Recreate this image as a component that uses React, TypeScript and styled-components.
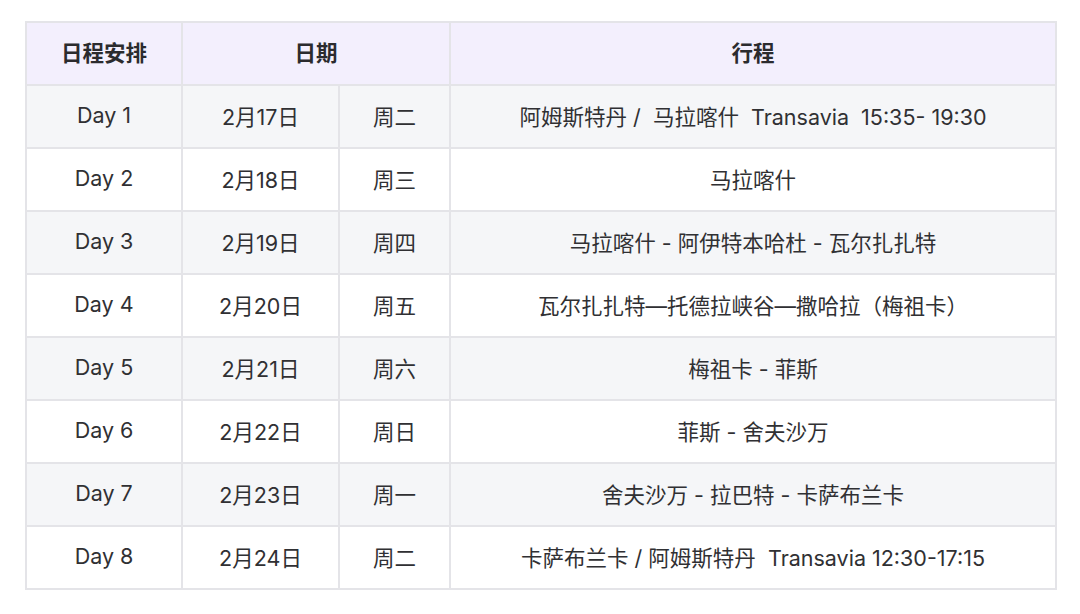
import styled, { createGlobalStyle } from "styled-components";

const GlobalStyle = createGlobalStyle`
  body {
    margin: 0;
    background: #ffffff;
    font-family: Inter, "Noto Sans CJK SC", sans-serif;
  }
`;

type Row = {
  day: string;
  date: string;
  week: string;
  trip: string;
};

const rows: Row[] = [
  { day: "Day 1", date: "2月17日", week: "周二", trip: "阿姆斯特丹 /  马拉喀什  Transavia  15:35- 19:30" },
  { day: "Day 2", date: "2月18日", week: "周三", trip: "马拉喀什" },
  { day: "Day 3", date: "2月19日", week: "周四", trip: "马拉喀什 - 阿伊特本哈杜 - 瓦尔扎扎特" },
  { day: "Day 4", date: "2月20日", week: "周五", trip: "瓦尔扎扎特—托德拉峡谷—撒哈拉（梅祖卡）" },
  { day: "Day 5", date: "2月21日", week: "周六", trip: "梅祖卡 - 菲斯" },
  { day: "Day 6", date: "2月22日", week: "周日", trip: "菲斯 - 舍夫沙万" },
  { day: "Day 7", date: "2月23日", week: "周一", trip: "舍夫沙万 - 拉巴特 - 卡萨布兰卡" },
  { day: "Day 8", date: "2月24日", week: "周二", trip: "卡萨布兰卡 / 阿姆斯特丹  Transavia 12:30-17:15" },
];

export default function App() {
  return (
    <Page>
      <GlobalStyle />
      <Schedule>
        <colgroup>
          <col style={{ width: 156 }} />
          <col style={{ width: 157 }} />
          <col style={{ width: 111 }} />
          <col style={{ width: 606 }} />
        </colgroup>
        <thead>
          <tr>
            <HeadCell>日程安排</HeadCell>
            <HeadCell colSpan={2}>日期</HeadCell>
            <HeadCell>行程</HeadCell>
          </tr>
        </thead>
        <tbody>
          {rows.map((r, i) => (
            <BodyRow key={r.day} $striped={i % 2 === 0}>
              <Cell>{r.day}</Cell>
              <Cell>{r.date}</Cell>
              <Cell>{r.week}</Cell>
              <Cell>{r.trip}</Cell>
            </BodyRow>
          ))}
        </tbody>
      </Schedule>
    </Page>
  );
}

const Page = styled.div`
  padding: 21px 0 0 25px;
`;

const Schedule = styled.table`
  border-collapse: collapse;
  table-layout: fixed;
  width: 1032px;
  border: 2px solid #e4e4e8;
  color: #303033;
  font-size: 21.5px;
`;

const HeadCell = styled.th`
  height: 63px;
  box-sizing: border-box;
  padding: 0 0 4px;
  background: #f3effd;
  border: 2px solid #e4e4e8;
  font-weight: 700;
  text-align: center;
  color: #2b2b2e;
`;

const BodyRow = styled.tr<{ $striped: boolean }>`
  background: ${(p) => (p.$striped ? "#f5f6f8" : "#ffffff")};
`;

const Cell = styled.td`
  height: 63px;
  box-sizing: border-box;
  padding: 0 0 3px;
  border: 2px solid #e4e4e8;
  text-align: center;
  white-space: pre;
`;
